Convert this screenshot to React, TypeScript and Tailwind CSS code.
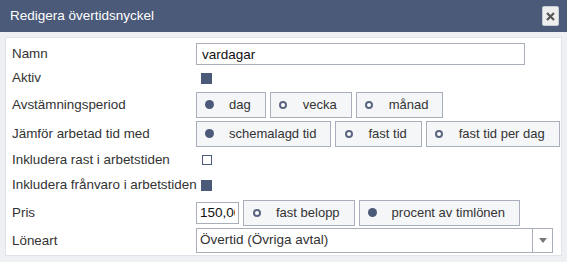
import React from "react";

const font = { fontFamily: '"Liberation Sans", Arial, sans-serif' };

function Radio({ label, checked }: { label: string; checked?: boolean }) {
  return (
    <div className="flex h-[26px] items-center border border-[#a9aebb] bg-[#f5f6f8] pr-[14px] text-[13px] text-[#333]">
      <div className="flex w-[25px] justify-center">
        {checked ? (
          <div className="h-[9px] w-[9px] rounded-full bg-[#4a5a78]" />
        ) : (
          <div className="h-[8px] w-[8px] rounded-full border-2 border-[#5a6680] bg-white" />
        )}
      </div>
      <span className="pl-[7px]">{label}</span>
    </div>
  );
}

function Row({ label, h, children }: { label: string; h: string; children?: React.ReactNode }) {
  return (
    <div className={`flex items-center ${h}`}>
      <div className="w-[190px] shrink-0 pl-[6px] pt-[1px] text-[13.4px] text-[#333] whitespace-nowrap">{label}</div>
      <div className="flex items-center gap-[4px]">{children}</div>
    </div>
  );
}

export default function App() {
  return (
    <div className="h-[262px] w-[567px] overflow-hidden bg-[#eef0f4]" style={font}>
      {/* header */}
      <div className="flex h-[32px] items-center justify-between bg-[#4a5a78] pl-[10px] pr-[8px]">
        <span className="text-[13.5px] text-white">Redigera övertidsnyckel</span>
        <button className="flex h-[20px] w-[17px] items-center justify-center rounded-[2px] border border-[#c9ccd2] bg-[#eeeeee]">
          <svg width="9" height="9" viewBox="0 0 9 9">
            <path d="M1 1L8 8M8 1L1 8" stroke="#555" strokeWidth="2.2" />
          </svg>
        </button>
      </div>

      <div className="px-[5px] pt-[5px]">
        <div className="border border-[#e0e3ea] bg-white pt-[4px] pb-[1px]">
          <Row label="Namn" h="h-[24px]">
            <input
              readOnly
              value="vardagar"
              className="h-[22px] w-[329px] border border-[#a9aebb] px-[5px] text-[13.5px] text-[#111] outline-none"
              style={font}
            />
          </Row>
          <Row label="Aktiv" h="h-[24px]">
            <div className="ml-[5px] h-[11px] w-[11px] bg-[#4a5a78]" />
          </Row>
          <Row label="Avstämningsperiod" h="h-[29px]">
            <Radio label="dag" checked />
            <Radio label="vecka" />
            <Radio label="månad" />
          </Row>
          <Row label="Jämför arbetad tid med" h="h-[29px]">
            <Radio label="schemalagd tid" checked />
            <Radio label="fast tid" />
            <Radio label="fast tid per dag" />
          </Row>
          <Row label="Inkludera rast i arbetstiden" h="h-[24px]">
            <div className="ml-[6px] h-[10px] w-[10px] border border-[#4a5a78] bg-white" />
          </Row>
          <Row label="Inkludera frånvaro i arbetstiden" h="h-[26px]">
            <div className="ml-[5px] h-[11px] w-[11px] bg-[#4a5a78]" />
          </Row>
          <Row label="Pris" h="h-[29px]">
            <input
              readOnly
              value="150,00"
              className="h-[22px] w-[43px] border border-[#a9aebb] px-[3px] text-[13.5px] text-[#111] outline-none"
              style={font}
            />
            <Radio label="fast belopp" />
            <Radio label="procent av timlönen" checked />
          </Row>
          <Row label="Löneart" h="h-[27px]">
            <div className="flex h-[25px] w-[357px] items-stretch border border-[#a9aebb] bg-white">
              <div className="flex flex-1 items-center pl-[3px] text-[13.5px] text-[#333]">Övertid (Övriga avtal)</div>
              <div className="flex w-[20px] items-center justify-center border-l border-[#a9aebb]">
                <svg width="8" height="5" viewBox="0 0 8 5">
                  <path d="M0 0H8L4 5Z" fill="#777" />
                </svg>
              </div>
            </div>
          </Row>
        </div>
      </div>
    </div>
  );
}
